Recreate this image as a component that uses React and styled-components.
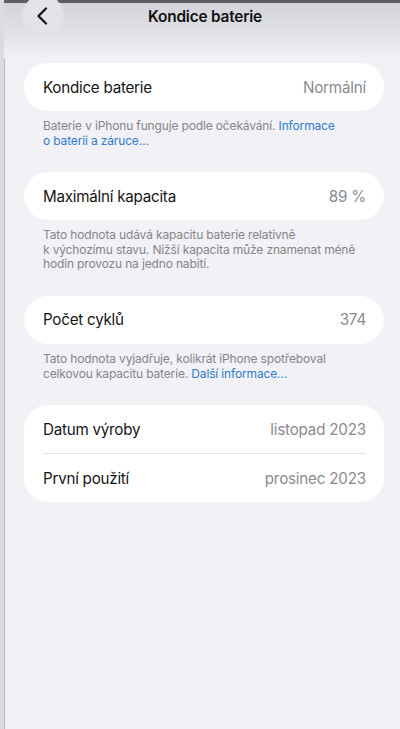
import React from "react";
import styled, { createGlobalStyle } from "styled-components";

const GlobalStyle = createGlobalStyle`
  html, body {
    margin: 0;
    padding: 0;
    background: #f2f1f6;
  }
  body {
    font-family: Inter, "Noto Sans", "Liberation Sans", sans-serif;
    -webkit-font-smoothing: antialiased;
  }
`;

const sections = [
  {
    rows: [{ label: "Kondice baterie", value: "Normální" }],
    note: ["Baterie v iPhonu funguje podle očekávání. ", "Informace o\u00a0baterii a\u00a0záruce…"],
  },
  {
    rows: [{ label: "Maximální kapacita", value: "89 %" }],
    note: ["Tato hodnota udává kapacitu baterie relativně k\u00a0výchozímu stavu. Nižší kapacita může znamenat méně hodin provozu na jedno nabití."],
  },
  {
    rows: [{ label: "Počet cyklů", value: "374" }],
    note: ["Tato hodnota vyjadřuje, kolikrát iPhone spotřeboval celkovou kapacitu baterie. ", "Další informace…"],
  },
  {
    rows: [
      { label: "Datum výroby", value: "listopad 2023" },
      { label: "První použití", value: "prosinec 2023" },
    ],
  },
];

function BackIcon() {
  return (
    <svg width="12" height="18" viewBox="0 0 12 18" fill="none">
      <path d="M10 1.5 L2.5 9 L10 16.5" stroke="#111" strokeWidth="2.2" strokeLinecap="round" strokeLinejoin="round" />
    </svg>
  );
}

export default function App() {
  return (
    <>
      <GlobalStyle />
      <Screen>
        <StatusStrip />
        <NavBar>
          <BackButton aria-label="Zpět">
            <BackIcon />
          </BackButton>
          <Title>Kondice baterie</Title>
        </NavBar>
        <Content>
          {sections.map((s, i) => (
            <Section key={i}>
              <Card>
                {s.rows.map((r, j) => (
                  <Row key={j} $divider={j > 0}>
                    <Label>{r.label}</Label>
                    <Value>{r.value}</Value>
                  </Row>
                ))}
              </Card>
              {s.note && (
                <Note>
                  {s.note[0]}
                  {s.note[1] && <Link>{s.note[1]}</Link>}
                </Note>
              )}
            </Section>
          ))}
        </Content>
      </Screen>
    </>
  );
}

const Screen = styled.div`
  width: 400px;
  min-height: 729px;
  box-sizing: border-box;
  border-left: 4px solid #dcdbe0;
  box-shadow: inset 1px 0 0 #b9b8bd;
  background: #f2f1f6;
  position: relative;
  overflow: hidden;
`;

const StatusStrip = styled.div`
  height: 3px;
  background: #5e5e66;
`;

const NavBar = styled.div`
  position: relative;
  height: 56px;
  display: flex;
  justify-content: center;
  background: linear-gradient(#d4d3d9 0%, #e2e1e7 55%, #f2f1f6 100%);
`;

const BackButton = styled.button`
  position: absolute;
  left: 18px;
  top: -8px;
  width: 42px;
  height: 42px;
  border-radius: 50%;
  border: none;
  padding: 0 2px 0 0;
  background: #e3e2e8;
  display: flex;
  align-items: center;
  justify-content: center;
`;

const Title = styled.div`
  margin-top: 4px;
  margin-left: 6px;
  font-size: 15.4px;
  font-weight: 600;
  color: #111;
  letter-spacing: -0.2px;
`;

const Content = styled.div`
  display: flex;
  flex-direction: column;
  gap: 24px;
  padding: 4px 16px 0 20px;
`;

const Section = styled.div`
  display: flex;
  flex-direction: column;
`;

const Card = styled.div`
  background: #fff;
  border-radius: 24px;
  padding: 0 18px 0 19px;
`;

const Row = styled.div`
  height: 48px;
  display: flex;
  align-items: center;
  justify-content: space-between;
  border-top: ${(p) => (p.$divider ? "1px solid #e3e3e6" : "none")};
`;

const Label = styled.span`
  font-size: 15.2px;
  color: #161616;
  letter-spacing: -0.25px;
`;

const Value = styled.span`
  font-size: 15.2px;
  color: #8a8a8e;
  letter-spacing: -0.2px;
`;

const Note = styled.p`
  margin: 8px 0 0;
  padding: 0 18px 0 19px;
  font-size: 12px;
  line-height: 14.6px;
  color: #85858a;
  letter-spacing: -0.15px;
`;

const Link = styled.span`
  color: #2f7dd1;
`;
